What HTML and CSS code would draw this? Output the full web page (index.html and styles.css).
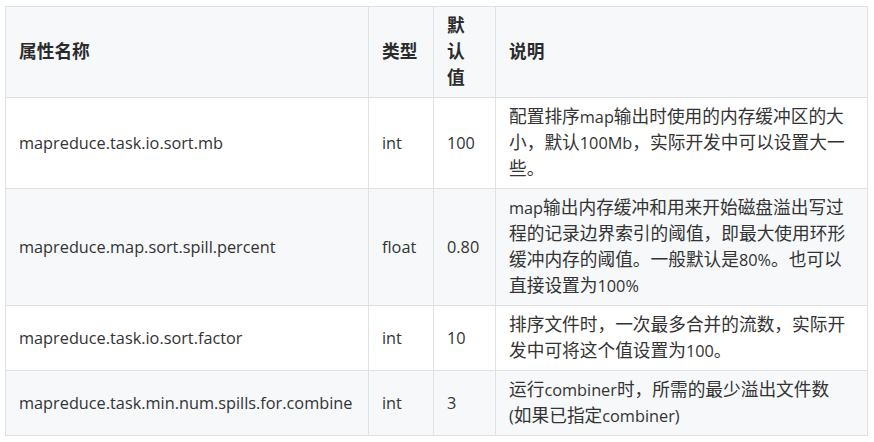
FILE: index.html
```html
<!DOCTYPE html>
<html lang="zh-CN">
<head>
<meta charset="utf-8">
<title>属性</title>
<link rel="stylesheet" href="styles.css">
</head>
<body>
<table class="props">
  <colgroup>
    <col class="c-name">
    <col class="c-type">
    <col class="c-def">
    <col class="c-desc">
  </colgroup>
  <thead>
    <tr>
      <th><span class="zh">属性名称</span></th>
      <th><span class="zh">类型</span></th>
      <th class="def"><span class="zh">默</span><span class="zh">认</span><span class="zh">值</span></th>
      <th class="desc"><span class="zh">说明</span></th>
    </tr>
  </thead>
  <tbody>
    <tr>
      <td>mapreduce.task.io.sort.mb</td>
      <td>int</td>
      <td>100</td>
      <td class="desc"><span class="zh">配置排序</span>map<span class="zh">输出时使用的内存缓冲区的大</span><span class="zh">小，默认</span>100Mb<span class="zh">，实际开发中可以设置大一</span><span class="zh">些。</span></td>
    </tr>
    <tr>
      <td>mapreduce.map.sort.spill.percent</td>
      <td>float</td>
      <td>0.80</td>
      <td class="desc">map<span class="zh">输出内存缓冲和用来开始磁盘溢出写过</span><span class="zh">程的记录边界索引的阈值，即最大使用环形</span><span class="zh">缓冲内存的阈值。一般默认是</span>80%<span class="zh">。也可以</span><span class="zh">直接设置为</span>100%</td>
    </tr>
    <tr>
      <td>mapreduce.task.io.sort.factor</td>
      <td>int</td>
      <td>10</td>
      <td class="desc"><span class="zh">排序文件时，一次最多合并的流数，实际开</span><span class="zh">发中可将这个值设置为</span>100<span class="zh">。</span></td>
    </tr>
    <tr>
      <td>mapreduce.task.min.num.spills.for.combine</td>
      <td>int</td>
      <td>3</td>
      <td class="desc"><span class="zh">运行</span>combiner<span class="zh">时，所需的最少溢出文件数</span>(<span class="zh">如果已指定</span>combiner)</td>
    </tr>
  </tbody>
</table>
</body>
</html>
```

FILE: styles.css
```css
html, body {
  background: #ffffff;
}
body {
  margin: 6px 5px;
  font-family: "Open Sans", "Noto Sans CJK SC", sans-serif;
  font-size: 16.3px;
  line-height: 26px;
  color: #333333;
}
.zh {
  font-family: "Noto Sans CJK SC", "Open Sans", sans-serif;
  font-size: 17.7px;
  line-height: 1;
}
.props {
  border-collapse: collapse;
  border-spacing: 0;
  table-layout: fixed;
  width: 862px;
}
.c-name { width: 363px; }
.c-type { width: 65px; }
.c-def { width: 62px; }
.c-desc { width: 372px; }
.props th,
.props td {
  border: 1px solid #dfe2e5;
  padding: 6px 13px;
  text-align: left;
  vertical-align: middle;
}
.props th {
  font-weight: 700;
  color: #2b2b2b;
}
.props th.def {
  padding-right: 16px;
}
.props .desc {
  padding-right: 19px;
}
.props thead tr {
  background: #f6f8fa;
}
.props tbody tr:nth-child(2n) {
  background: #f6f8fa;
}
```
